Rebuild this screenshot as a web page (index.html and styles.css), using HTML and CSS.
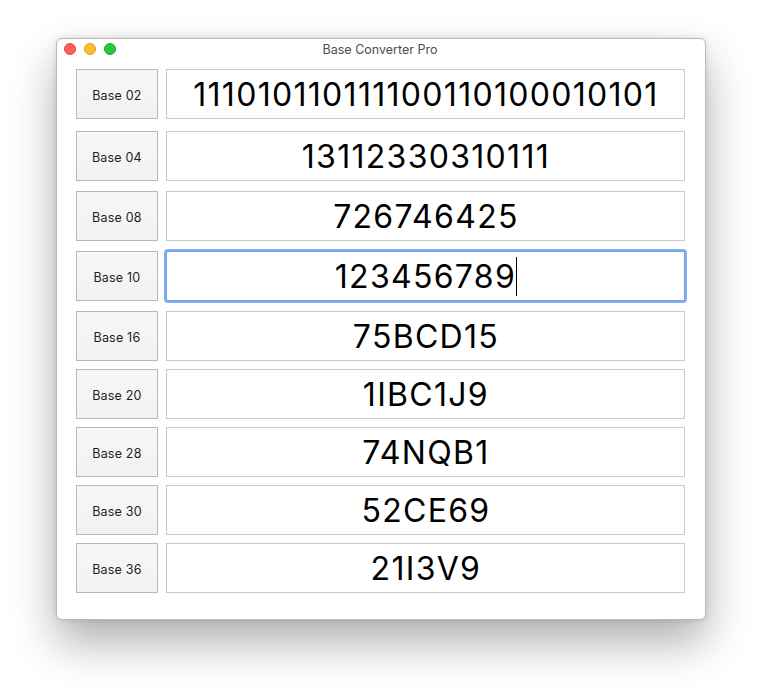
FILE: index.html
```html
<!DOCTYPE html>
<html>
<head>
<meta charset="utf-8">
<link rel="stylesheet" href="styles.css">
</head>
<body>
<div class="window">
  <div class="titlebar">
    <div class="lights">
      <span class="light red"></span>
      <span class="light yellow"></span>
      <span class="light green"></span>
    </div>
    <div class="title">Base Converter Pro</div>
  </div>
  <div class="content">
    <div class="row r1"><div class="btn">Base 02</div><div class="field">111010110111100110100010101</div></div>
    <div class="row r2"><div class="btn">Base 04</div><div class="field">13112330310111</div></div>
    <div class="row r2"><div class="btn">Base 08</div><div class="field">726746425</div></div>
    <div class="row r2"><div class="btn">Base 10</div><div class="field focused">123456789<span class="caret"></span></div></div>
    <div class="row r3"><div class="btn">Base 16</div><div class="field">75BCD15</div></div>
    <div class="row r3"><div class="btn">Base 20</div><div class="field">1IBC1J9</div></div>
    <div class="row r3"><div class="btn">Base 28</div><div class="field">74NQB1</div></div>
    <div class="row r3"><div class="btn">Base 30</div><div class="field">52CE69</div></div>
    <div class="row"><div class="btn">Base 36</div><div class="field">21I3V9</div></div>
  </div>
</div>
</body>
</html>
```
FILE: styles.css
```css
html, body {
  margin: 0;
  padding: 0;
  background: #ffffff;
}
body {
  box-sizing: border-box;
  min-height: 695px;
  padding: 38px 0 0 56px;
  font-family: Inter, "Liberation Sans", sans-serif;
}
.window {
  box-sizing: border-box;
  width: 650px;
  height: 582px;
  background: #ffffff;
  border: 1px solid #b9b9b9;
  border-radius: 6px;
  box-shadow: 0 22px 45px rgba(0, 0, 0, 0.32), 0 0 6px rgba(0, 0, 0, 0.12);
  display: flex;
  flex-direction: column;
}
.titlebar {
  height: 21px;
  position: relative;
  display: flex;
  align-items: center;
  justify-content: center;
}
.lights {
  position: absolute;
  left: 7px;
  top: 4px;
  display: flex;
  gap: 8px;
}
.light {
  width: 12px;
  height: 12px;
  border-radius: 50%;
  box-sizing: border-box;
}
.red { background: #fe5f57; border: 1px solid #e1463e; }
.yellow { background: #febc2e; border: 1px solid #dea123; }
.green { background: #28c840; border: 1px solid #1aab29; }
.title {
  font-size: 12.5px;
  color: #4d4d4d;
  margin-left: -2px;
}
.content {
  padding: 9px 20px 0 19px;
  display: flex;
  flex-direction: column;
}
.row {
  display: flex;
  gap: 8px;
  height: 50px;
}
.r1 { margin-bottom: 12px; }
.r2 { margin-bottom: 10px; }
.r3 { margin-bottom: 8px; }
.btn {
  box-sizing: border-box;
  width: 82px;
  height: 50px;
  padding-top: 2px;
  border: 1px solid #b8b8b8;
  background: linear-gradient(#f7f7f7, #f2f2f2);
  display: flex;
  align-items: center;
  justify-content: center;
  font-size: 12.5px;
  letter-spacing: 0.2px;
  color: #1e1e1e;
}
.field {
  box-sizing: border-box;
  width: 520px;
  height: 50px;
  border: 1px solid #c9c9c9;
  background: #ffffff;
  display: flex;
  align-items: center;
  justify-content: center;
  font-size: 32px;
  letter-spacing: 1.3px;
  padding-left: 1px;
  color: #000000;
}
.field.focused {
  border: 1px solid #6f9fe6;
  box-shadow: 0 0 0 2px #82adee;
  border-radius: 2px;
}
.caret {
  display: inline-block;
  width: 1px;
  height: 39px;
  background: #000000;
  margin-left: 0;
}
```
